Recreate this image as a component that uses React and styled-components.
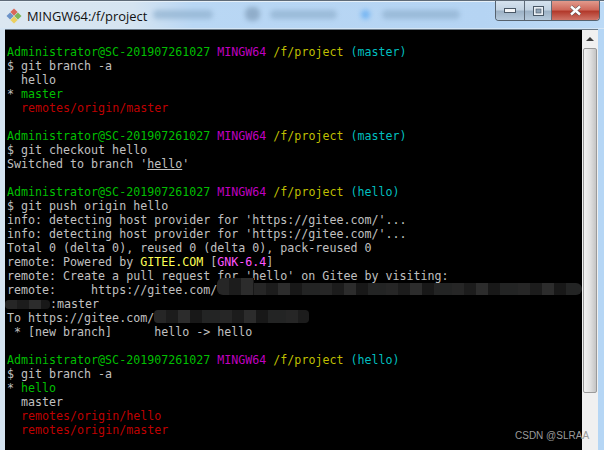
import React from 'react'
import styled, { createGlobalStyle } from 'styled-components'

const Global = createGlobalStyle`
  html, body { margin: 0; padding: 0; background: #000; overflow: hidden; }
`

const Window = styled.div`
  position: relative;
  width: 604px;
  height: 450px;
  display: flex;
  flex-direction: column;
  overflow: hidden;
  background: linear-gradient(to right, #d5e4f1 0%, #c4dcf2 50%, #b5d6f5 100%);
`

const TitleBar = styled.div`
  position: relative;
  height: 29px;
  flex: none;
  display: flex;
  align-items: center;
  padding: 2px 0 0 6px;
  box-sizing: border-box;
  border-top: 1px solid #5f6b78;
  background: linear-gradient(to right, #dbe7f1 0%, #d5e4f1 22%, #b9d7f4 32%, #b5d4f3 80%, #bcdaf6 100%);
  box-shadow: inset 0 1px 0 #e6f0f8, inset 0 -1px 0 #d4e6f6;
`

const Title = styled.span`
  margin-left: 5px;
  font: 12.9px "Open Sans", "Liberation Sans", sans-serif;
  color: #111;
`

const Smudge = styled.span`
  position: absolute;
  top: ${p => p.$top || 9}px;
  left: ${p => p.$left}px;
  width: ${p => p.$width}px;
  height: ${p => p.$height || 9}px;
  border-radius: 6px;
  background: ${p => p.$color || '#8fb0ce'};
  filter: blur(2.5px);
  opacity: .7;
`

const Controls = styled.div`
  position: absolute;
  top: 0;
  right: 4px;
  display: flex;
  height: 19px;
  border: 1px solid #56626e;
  border-top: none;
  border-radius: 0 0 4px 4px;
  overflow: hidden;
`

const Control = styled.div`
  width: ${p => p.$width}px;
  display: flex;
  align-items: center;
  justify-content: center;
  border-left: ${p => (p.$first ? 'none' : '1px solid #5f6b78')};
  background: ${p => (p.$close
    ? 'linear-gradient(to bottom, #e29a8c, #cf6a5c 45%, #b33a2c 55%, #cf7568)'
    : 'linear-gradient(to bottom, #d5e2ee, #c3d3e2 45%, #9db2c6 55%, #b6cadc)')};
`

const Body = styled.div`
  flex: 1;
  display: flex;
  margin: 0 6px 0 5px;
  min-height: 0;
  border-top: 1px solid #6d7b88;
`

const Terminal = styled.div`
  flex: 1;
  margin: 0;
  padding: 15px 0 0 2px;
  background: #000;
  color: #c0c0c0;
  font: 11.65px/14px "DejaVu Sans Mono", "Liberation Mono", monospace;
  overflow: hidden;
`

const Line = styled.div`
  height: 14px;
  white-space: pre;
`

const C = styled.span`
  color: ${p => p.$c};
  ${p => p.$u && 'text-decoration: underline;'}
`

const Redact = styled.span`
  display: inline-block;
  width: ${p => p.$width}px;
  height: ${p => p.$height}px;
  margin-top: ${p => p.$lift || 0}px;
  margin-left: ${p => p.$pull || 0}px;
  vertical-align: ${p => p.$shift}px;
  border-radius: ${p => p.$radius || '4px'};
  background: repeating-linear-gradient(to right, #262626 0 12px, #1c1c1c 12px 24px, #2c2c2c 24px 36px, #181818 36px 48px, #232424 48px 66px);
`

const Scrollbar = styled.div`
  width: 16px;
  flex: none;
  display: flex;
  flex-direction: column;
  align-items: center;
  background: #f0f0f0;
`

const ArrowUp = styled.div`
  height: 18px;
  flex: none;
  display: flex;
  align-items: center;
  justify-content: center;
  &::before {
    content: '';
    border: 4px solid transparent;
    border-bottom: 4px solid #3c3c3c;
    border-top: none;
  }
`

const Thumb = styled.div`
  width: 14px;
  height: 345px;
  flex: none;
  box-sizing: border-box;
  border: 1px solid #9a9a9a;
  border-radius: 2px;
  background: linear-gradient(to right, #f2f2f2, #e4e4e4 45%, #c4c4c4);
`

const Watermark = styled.div`
  position: absolute;
  top: 430px;
  left: 515px;
  font: 10px "Liberation Sans", sans-serif;
  color: #9a9a9a;
`

const green = '#00bf00'
const magenta = '#bf00bf'
const yellow = '#bfbf00'
const cyan = '#00bfbf'
const red = '#bf0000'

const Prompt = ({ branch }) => (
  <Line>
    <C $c={green}>Administrator@SC-201907261027</C> <C $c={magenta}>MINGW64</C> <C $c={yellow}>/f/project</C> <C $c={cyan}>({branch})</C>
  </Line>
)

const GitLogo = () => (
  <svg width="16" height="16" viewBox="0 0 16 16" style={{ flex: 'none' }}>
    <path d="M8 .5 L11.6 4.1 L8 7.7 L4.4 4.1 Z" fill="#d9685a" />
    <path d="M4.1 4.4 L7.7 8 L4.1 11.6 L.5 8 Z" fill="#6c93c8" />
    <path d="M11.9 4.4 L15.5 8 L11.9 11.6 L8.3 8 Z" fill="#7db65a" />
    <path d="M8 8.3 L11.6 11.9 L8 15.5 L4.4 11.9 Z" fill="#ecd05e" />
  </svg>
)

export default function App() {
  return (
    <Window>
      <Global />
      <TitleBar>
        <GitLogo />
        <Title>MINGW64:/f/project</Title>
        <Smudge $left={153} $width={60} />
        <Smudge $left={245} $width={15} $top={6} $height={14} $color="#7f9cb8" />
        <Smudge $left={270} $width={67} />
        <Smudge $left={361} $width={9} $color="#55a6f2" />
        <Smudge $left={382} $width={78} />
        <Controls>
          <Control $width={28} $first>
            <svg width="12" height="5" viewBox="0 0 12 5"><rect x=".5" y=".5" width="11" height="4" fill="#f4f6f8" stroke="#4a5866" /></svg>
          </Control>
          <Control $width={26}>
            <svg width="11" height="10" viewBox="0 0 11 10"><rect x=".5" y=".5" width="10" height="9" fill="#e8eef4" stroke="#4a5866" /><rect x="3" y="3" width="5" height="4" fill="#8fa3b6" stroke="#4a5866" strokeWidth=".6" /></svg>
          </Control>
          <Control $width={47} $close>
            <svg width="13" height="11" viewBox="0 0 13 11"><path d="M2 1.5 L11 9.5 M11 1.5 L2 9.5" stroke="#4d4d4d" strokeWidth="3.6" /><path d="M2 1.5 L11 9.5 M11 1.5 L2 9.5" stroke="#fff" strokeWidth="2.4" /></svg>
          </Control>
        </Controls>
      </TitleBar>
      <Body>
        <Terminal>
          <Prompt branch="master" />
          <Line>$ git branch -a</Line>
          <Line>  hello</Line>
          <Line>* <C $c={green}>master</C></Line>
          <Line>  <C $c={red}>remotes/origin/master</C></Line>
          <Line> </Line>
          <Prompt branch="master" />
          <Line>$ git checkout hello</Line>
          <Line>Switched to branch '<C $c="#c0c0c0" $u>hello</C>'</Line>
          <Line> </Line>
          <Prompt branch="hello" />
          <Line>$ git push origin hello</Line>
          <Line>info: detecting host provider for 'https://gitee.com/'...</Line>
          <Line>info: detecting host provider for 'https://gitee.com/'...</Line>
          <Line>Total 0 (delta 0), reused 0 (delta 0), pack-reused 0</Line>
          <Line>remote: Powered by <C $c="#ffff55">GITEE.COM</C> [<C $c="#ff55ff">GNK-6.4</C>]</Line>
          <Line>remote: Create a pull request for 'hello' on Gitee by visiting:</Line>
          <Line>remote:     https://gitee.com/<Redact $width={37} $height={17} $lift={-6} $shift={-1} $radius="6px 0 0 6px" /><Redact $width={328} $height={12} $lift={-2} $shift={-1} $radius="0 6px 6px 0" /></Line>
          <Line><Redact $width={45} $height={9} $pull={-2} $shift={-1} /><C $c="#c0c0c0">:master</C></Line>
          <Line>To https://gitee.com/<Redact $width={155} $height={13} $lift={-3} $shift={-1} /></Line>
          <Line> * [new branch]      hello -&gt; hello</Line>
          <Line> </Line>
          <Prompt branch="hello" />
          <Line>$ git branch -a</Line>
          <Line>* <C $c={green}>hello</C></Line>
          <Line>  master</Line>
          <Line>  <C $c={red}>remotes/origin/hello</C></Line>
          <Line>  <C $c={red}>remotes/origin/master</C></Line>
        </Terminal>
        <Scrollbar>
          <ArrowUp />
          <Thumb />
        </Scrollbar>
      </Body>
      <Watermark>CSDN @SLRAA</Watermark>
    </Window>
  )
}
